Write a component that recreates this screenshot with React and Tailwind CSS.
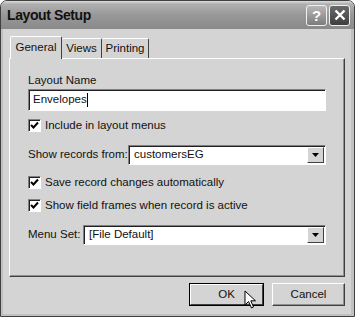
import React from "react";

const font = { fontFamily: '"Liberation Sans", Arial, sans-serif' };

function CheckBox({ label }) {
  return (
    <div className="flex items-center h-[13px] gap-[4px]">
      <div className="w-[13px] h-[13px] shrink-0 bg-white border border-t-[#808080] border-l-[#808080] border-r-white border-b-white shadow-[inset_1px_1px_0_#202020] flex items-center justify-center">
        <svg width="9" height="9" viewBox="0 0 9 9">
          <path d="M1 4 L3.5 6.5 L8 1.5" stroke="#000" strokeWidth="2" fill="none" />
        </svg>
      </div>
      <span className="text-[11.5px] leading-none text-[#111] whitespace-nowrap">{label}</span>
    </div>
  );
}

function Select({ value, width }) {
  return (
    <div
      className={`h-[20px] ${width} shrink-0 bg-white border border-t-[#808080] border-l-[#808080] border-r-white border-b-white shadow-[inset_1px_1px_0_#202020] flex items-center`}
    >
      <span className="flex-1 pl-[5px] text-[11.5px] text-[#111] leading-none">{value}</span>
      <div className="w-[17px] h-[16px] mr-[1px] bg-[#d4d4d4] border border-t-white border-l-white border-r-[#404040] border-b-[#404040] flex items-center justify-center">
        <svg width="7" height="4" viewBox="0 0 7 4">
          <path d="M0 0 H7 L3.5 4 Z" fill="#000" />
        </svg>
      </div>
    </div>
  );
}

function Tab({ label, active, width }) {
  return (
    <div
      className={
        active
          ? `${width} h-[23px] -mb-[1px] z-10 bg-[#d4d4d4] border-t border-l border-t-white border-l-white border-r border-r-[#404040] rounded-t-[2px] flex items-center justify-center text-[11.5px] text-[#111]`
          : `${width} h-[20px] bg-[#d4d4d4] border-t border-t-white border-r border-r-[#404040] rounded-t-[2px] flex items-center justify-center text-[11.5px] text-[#111]`
      }
    >
      {label}
    </div>
  );
}

export default function App() {
  return (
    <div
      className="w-[355px] h-[317px] bg-[#d4d4d4] border border-[#404040] rounded-t-[7px] overflow-hidden flex flex-col relative"
      style={font}
    >
      {/* title bar */}
      <div className="h-[28px] shrink-0 bg-[linear-gradient(#dedede_0px,#b0b0b0_3px,#989898_14px,#8a8a8a_100%)] flex items-center pl-[6px] pr-[4px]">
        <span className="flex-1 text-[14px] font-bold text-[#111] tracking-[-0.4px]">Layout Setup</span>
        <div className="w-[21px] h-[21px] rounded-[3px] border border-[#f0f0f0] bg-[linear-gradient(#b8b8b8,#7c7c7c)] flex items-center justify-center text-white font-bold text-[15px] leading-none">
          ?
        </div>
        <div className="w-[21px] h-[21px] ml-[2px] rounded-[3px] border border-[#f0f0f0] bg-[linear-gradient(#6a6a6a,#3e3e3e)] flex items-center justify-center">
          <svg width="12" height="12" viewBox="0 0 12 12">
            <path d="M1.5 1.5 L10.5 10.5 M10.5 1.5 L1.5 10.5" stroke="#fff" strokeWidth="2.4" />
          </svg>
        </div>
      </div>

      {/* body */}
      <div className="flex-1 flex flex-col px-[6px] pt-[6px] border-l-[2px] border-r-[3px] border-b-[2px] border-[#c0c0c0]">
        <div className="flex items-end pl-[1px] h-[23px]">
          <Tab label="General" width="w-[52px]" active />
          <Tab label="Views" width="w-[40px]" />
          <Tab label="Printing" width="w-[47px]" />
        </div>

        <div className="h-[219px] border border-t-white border-l-white border-r-[#404040] border-b-[#404040] shadow-[inset_-1px_-1px_0_#909090] pl-[18px] pt-[14px] flex flex-col">
          <div className="h-[14px] text-[11.5px] leading-[14px] text-[#111]">Layout Name</div>
          <div className="mt-[2px] h-[22px] w-[298px] bg-white border border-t-[#808080] border-l-[#808080] border-r-white border-b-white shadow-[inset_1px_1px_0_#202020] flex items-center pl-[4px]">
            <span className="text-[11.5px] text-[#111] leading-none">Envelopes</span>
            <span className="w-[1px] h-[14px] bg-black"></span>
          </div>
          <div className="mt-[8px]">
            <CheckBox label="Include in layout menus" />
          </div>
          <div className="mt-[13px] flex items-center">
            <span className="w-[100px] shrink-0 text-[11.5px] text-[#111] leading-none whitespace-nowrap">Show records from:</span>
            <Select value="customersEG" width="w-[198px]" />
          </div>
          <div className="mt-[11px]">
            <CheckBox label="Save record changes automatically" />
          </div>
          <div className="mt-[10px]">
            <CheckBox label="Show field frames when record is active" />
          </div>
          <div className="mt-[13px] flex items-center">
            <span className="w-[55px] shrink-0 text-[11.5px] text-[#111] leading-none whitespace-nowrap">Menu Set:</span>
            <Select value="[File Default]" width="w-[243px]" />
          </div>
        </div>

        <div className="mt-[6px] flex justify-end gap-[8px]">
          <div className="w-[75px] h-[23px] border border-black">
            <div className="w-full h-full border border-t-white border-l-white border-r-[#404040] border-b-[#404040] flex items-center justify-center text-[11.5px] text-[#111]">
              OK
            </div>
          </div>
          <div className="w-[73px] h-[23px] border border-t-white border-l-white border-r-[#404040] border-b-[#404040] shadow-[inset_-1px_-1px_0_#909090] flex items-center justify-center text-[11.5px] text-[#111]">
            Cancel
          </div>
        </div>
      </div>

      {/* mouse pointer */}
      <svg className="absolute left-[243px] top-[289px]" width="14" height="20" viewBox="0 0 14 20">
        <path d="M1 1 L1 15 L4.5 11.5 L7.5 18 L9.5 17 L6.8 10.8 L11.5 10.8 Z" fill="#fff" stroke="#000" strokeWidth="1" strokeLinejoin="miter" />
      </svg>
    </div>
  );
}
